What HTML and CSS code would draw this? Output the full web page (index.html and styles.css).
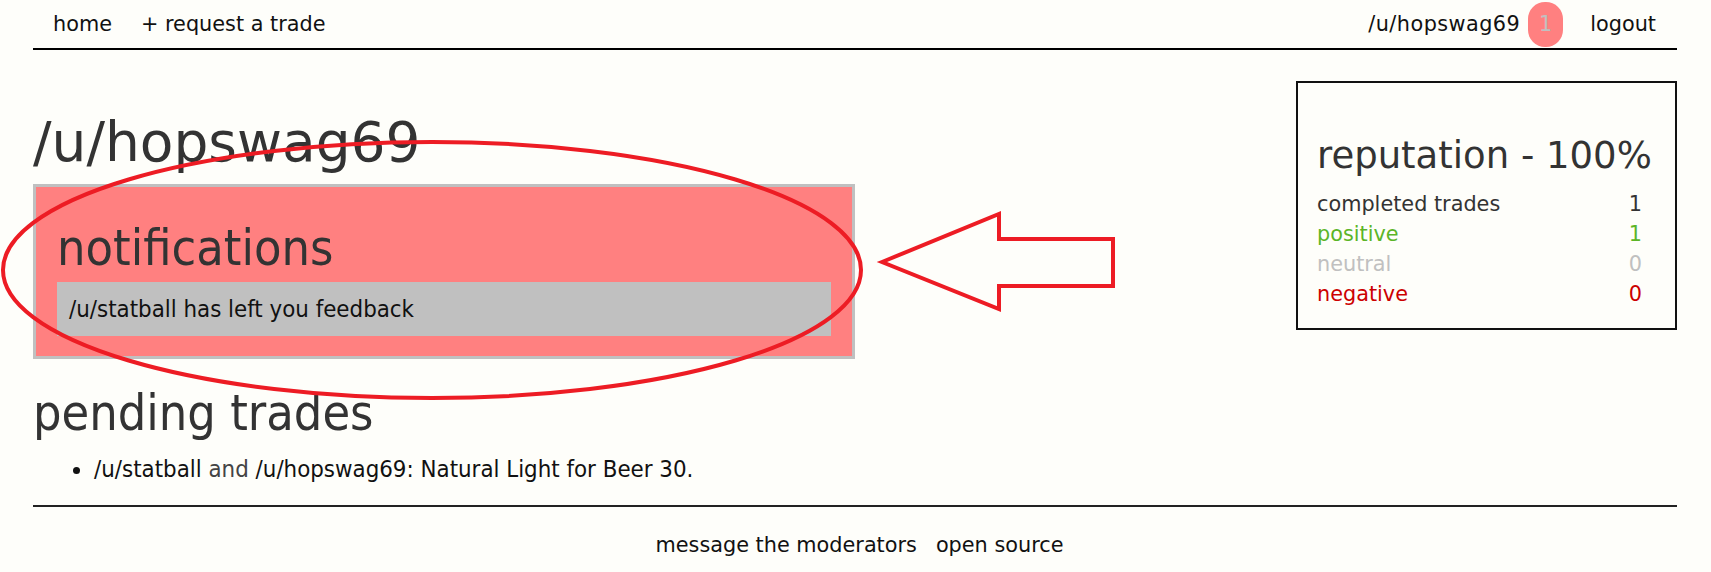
FILE: index.html
```html
<!DOCTYPE html>
<html>
<head>
<meta charset="utf-8">
<title>/u/hopswag69</title>
<link rel="stylesheet" href="styles.css">
</head>
<body>
<div class="page">
  <nav class="topnav">
    <div class="nav-left">
      <a class="nav-link" href="#">home</a>
      <a class="nav-link" href="#">+ request a trade</a>
    </div>
    <div class="nav-right">
      <a class="nav-link user-link" href="#">/u/hopswag69</a>
      <span class="badge">1</span>
      <a class="nav-link logout" href="#">logout</a>
    </div>
  </nav>

  <main class="main">
    <section class="left-col">
      <h1 class="user-title">/u/hopswag69</h1>
      <div class="notifications">
        <h2 class="cond-heading notif-heading">notifications</h2>
        <div class="notif-item">/u/statball has left you feedback</div>
      </div>
      <h2 class="cond-heading pending-heading">pending trades</h2>
      <ul class="trade-list">
        <li><a class="dark-link" href="#">/u/statball</a> <span class="muted">and</span> <a class="dark-link" href="#">/u/hopswag69</a>: Natural Light for Beer 30.</li>
      </ul>
    </section>

    <aside class="rep-box">
      <h3 class="rep-title">reputation - 100%</h3>
      <div class="rep-table">
        <div class="rep-row"><span>completed trades</span><span>1</span></div>
        <div class="rep-row positive"><span>positive</span><span>1</span></div>
        <div class="rep-row neutral"><span>neutral</span><span>0</span></div>
        <div class="rep-row negative"><span>negative</span><span>0</span></div>
      </div>
    </aside>
  </main>

  <footer class="footer">
    <a class="foot-link" href="#">message the moderators</a>
    <a class="foot-link" href="#">open source</a>
  </footer>
</div>

<svg class="annotation" width="1711" height="572" viewBox="0 0 1711 572" xmlns="http://www.w3.org/2000/svg">
  <ellipse cx="432" cy="270" rx="429" ry="128" fill="none" stroke="#ed1c24" stroke-width="4"/>
  <polygon points="882,262 999,214 999,239 1113,239 1113,286 999,286 999,309" fill="none" stroke="#ed1c24" stroke-width="4" stroke-linejoin="miter"/>
</svg>
</body>
</html>
```

FILE: styles.css
```css
html, body {
  margin: 0;
  padding: 0;
  background: #fefefa;
}

body {
  font-family: "DejaVu Sans", Verdana, sans-serif;
  color: #222;
  position: relative;
  width: 1711px;
  height: 572px;
  overflow: hidden;
}

a {
  color: #111;
  text-decoration: none;
}

.page {
  margin: 0 34px 0 33px;
}

/* top navigation */
.topnav {
  display: flex;
  justify-content: space-between;
  align-items: center;
  height: 48px;
  border-bottom: 2px solid #000;
  font-size: 20.8px;
  padding: 0 21px 0 20px;
}

.nav-left {
  display: flex;
  align-items: center;
  gap: 29px;
}

.nav-right {
  display: flex;
  align-items: center;
}

.user-link {
  letter-spacing: 0.45px;
}

.badge {
  display: flex;
  align-items: center;
  justify-content: center;
  box-sizing: border-box;
  width: 35px;
  height: 45px;
  margin-left: 8px;
  margin-right: 27px;
  background: #ff8080;
  color: #c0c0c0;
  border-radius: 17px;
}

/* main area */
.main {
  display: flex;
  justify-content: space-between;
  align-items: flex-start;
}

.left-col {
  width: 822px;
}

.user-title {
  font-size: 55px;
  font-weight: normal;
  line-height: 60px;
  color: #333;
  margin: 62px 0 12px;
}

.cond-heading {
  font-family: "DejaVu Sans Condensed", "DejaVu Sans", sans-serif;
  font-stretch: condensed;
  font-size: 50px;
  font-weight: normal;
  line-height: 60px;
  color: #333;
}

.notifications {
  background: #ff8080;
  border: 3px solid #c0c0c0;
  padding: 31px 21px 20px;
}

.notif-heading {
  margin: 0 0 4px;
}

.notif-item {
  background: #c0c0c0;
  font-family: "DejaVu Sans Condensed", "DejaVu Sans", sans-serif;
  font-stretch: condensed;
  font-size: 23.8px;
  line-height: 54px;
  padding: 0 12px;
  color: #111;
}

.pending-heading {
  margin: 24px 0 0;
}

.trade-list {
  font-family: "DejaVu Sans Condensed", "DejaVu Sans", sans-serif;
  font-stretch: condensed;
  font-size: 23.8px;
  line-height: 28px;
  margin: 12px 0 22px;
  padding-left: 61px;
  color: #111;
}

.muted {
  color: #444;
}

/* reputation */
.rep-box {
  margin-top: 31px;
  width: 381px;
  height: 249px;
  box-sizing: border-box;
  border: 2px solid #111;
  padding: 50px 20px 20px 19px;
}

.rep-title {
  font-size: 37px;
  font-weight: normal;
  line-height: 45px;
  color: #333;
  margin: 0 0 11px;
  white-space: nowrap;
}

.rep-table {
  width: 325px;
  font-size: 20.8px;
  line-height: 30px;
}

.rep-row {
  display: flex;
  justify-content: space-between;
  color: #333;
}

.rep-row.positive { color: #5bb527; }
.rep-row.neutral { color: #c0c0c0; }
.rep-row.negative { color: #cc0000; }

/* footer */
.footer {
  border-top: 2px solid #222;
  display: flex;
  justify-content: center;
  gap: 19px;
  padding: 25px 0 0 9px;
  font-size: 20.8px;
  line-height: 26px;
}

/* red annotation drawn over the screenshot */
.annotation {
  position: absolute;
  left: 0;
  top: 0;
  pointer-events: none;
}
```
